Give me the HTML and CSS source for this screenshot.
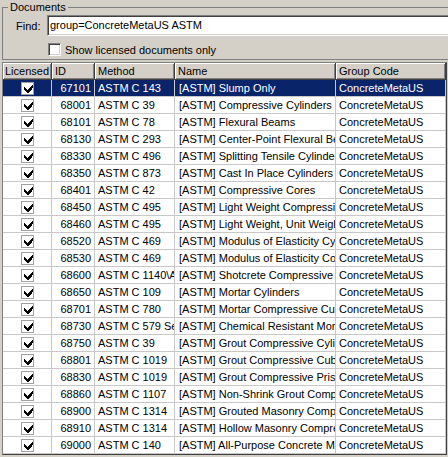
FILE: index.html
```html
<!DOCTYPE html>
<html>
<head>
<meta charset="utf-8">
<link rel="stylesheet" href="styles.css">
</head>
<body>
<fieldset class="group">
  <legend class="group-title">Documents</legend>
  <div class="find-row">
    <label class="find-label">Find:</label>
    <div class="textbox">group=ConcreteMetaUS ASTM</div>
  </div>
  <div class="check-row">
    <span class="checkbox"></span>
    <span class="check-text">Show licensed documents only</span>
  </div>
</fieldset>

<div class="grid">
  <div class="row head">
    <div class="cell c-lic">Licensed</div>
    <div class="cell c-id">ID</div>
    <div class="cell c-method">Method</div>
    <div class="cell c-name">Name</div>
    <div class="cell c-group">Group Code</div>
  </div>

  <div class="row selected">
    <div class="cell c-lic"><span class="cb on"></span></div>
    <div class="cell c-id">67101</div>
    <div class="cell c-method"><span class="clip">ASTM C 143</span></div>
    <div class="cell c-name"><span class="clip">[ASTM] Slump Only</span></div>
    <div class="cell c-group">ConcreteMetaUS</div>
  </div>
  <div class="row">
    <div class="cell c-lic"><span class="cb on"></span></div>
    <div class="cell c-id">68001</div>
    <div class="cell c-method"><span class="clip">ASTM C 39</span></div>
    <div class="cell c-name"><span class="clip">[ASTM] Compressive Cylinders</span></div>
    <div class="cell c-group">ConcreteMetaUS</div>
  </div>
  <div class="row">
    <div class="cell c-lic"><span class="cb on"></span></div>
    <div class="cell c-id">68101</div>
    <div class="cell c-method"><span class="clip">ASTM C 78</span></div>
    <div class="cell c-name"><span class="clip">[ASTM] Flexural Beams</span></div>
    <div class="cell c-group">ConcreteMetaUS</div>
  </div>
  <div class="row">
    <div class="cell c-lic"><span class="cb on"></span></div>
    <div class="cell c-id">68130</div>
    <div class="cell c-method"><span class="clip">ASTM C 293</span></div>
    <div class="cell c-name"><span class="clip">[ASTM] Center-Point Flexural Beams</span></div>
    <div class="cell c-group">ConcreteMetaUS</div>
  </div>
  <div class="row">
    <div class="cell c-lic"><span class="cb on"></span></div>
    <div class="cell c-id">68330</div>
    <div class="cell c-method"><span class="clip">ASTM C 496</span></div>
    <div class="cell c-name"><span class="clip">[ASTM] Splitting Tensile Cylinders</span></div>
    <div class="cell c-group">ConcreteMetaUS</div>
  </div>
  <div class="row">
    <div class="cell c-lic"><span class="cb on"></span></div>
    <div class="cell c-id">68350</div>
    <div class="cell c-method"><span class="clip">ASTM C 873</span></div>
    <div class="cell c-name"><span class="clip">[ASTM] Cast In Place Cylinders</span></div>
    <div class="cell c-group">ConcreteMetaUS</div>
  </div>
  <div class="row">
    <div class="cell c-lic"><span class="cb on"></span></div>
    <div class="cell c-id">68401</div>
    <div class="cell c-method"><span class="clip">ASTM C 42</span></div>
    <div class="cell c-name"><span class="clip">[ASTM] Compressive Cores</span></div>
    <div class="cell c-group">ConcreteMetaUS</div>
  </div>
  <div class="row">
    <div class="cell c-lic"><span class="cb on"></span></div>
    <div class="cell c-id">68450</div>
    <div class="cell c-method"><span class="clip">ASTM C 495</span></div>
    <div class="cell c-name"><span class="clip">[ASTM] Light Weight Compressive</span></div>
    <div class="cell c-group">ConcreteMetaUS</div>
  </div>
  <div class="row">
    <div class="cell c-lic"><span class="cb on"></span></div>
    <div class="cell c-id">68460</div>
    <div class="cell c-method"><span class="clip">ASTM C 495</span></div>
    <div class="cell c-name"><span class="clip">[ASTM] Light Weight, Unit Weight</span></div>
    <div class="cell c-group">ConcreteMetaUS</div>
  </div>
  <div class="row">
    <div class="cell c-lic"><span class="cb on"></span></div>
    <div class="cell c-id">68520</div>
    <div class="cell c-method"><span class="clip">ASTM C 469</span></div>
    <div class="cell c-name"><span class="clip">[ASTM] Modulus of Elasticity Cylinders</span></div>
    <div class="cell c-group">ConcreteMetaUS</div>
  </div>
  <div class="row">
    <div class="cell c-lic"><span class="cb on"></span></div>
    <div class="cell c-id">68530</div>
    <div class="cell c-method"><span class="clip">ASTM C 469</span></div>
    <div class="cell c-name"><span class="clip">[ASTM] Modulus of Elasticity Cores</span></div>
    <div class="cell c-group">ConcreteMetaUS</div>
  </div>
  <div class="row">
    <div class="cell c-lic"><span class="cb on"></span></div>
    <div class="cell c-id">68600</div>
    <div class="cell c-method"><span class="clip">ASTM C 1140\ACI</span></div>
    <div class="cell c-name"><span class="clip">[ASTM] Shotcrete Compressive</span></div>
    <div class="cell c-group">ConcreteMetaUS</div>
  </div>
  <div class="row">
    <div class="cell c-lic"><span class="cb on"></span></div>
    <div class="cell c-id">68650</div>
    <div class="cell c-method"><span class="clip">ASTM C 109</span></div>
    <div class="cell c-name"><span class="clip">[ASTM] Mortar Cylinders</span></div>
    <div class="cell c-group">ConcreteMetaUS</div>
  </div>
  <div class="row">
    <div class="cell c-lic"><span class="cb on"></span></div>
    <div class="cell c-id">68701</div>
    <div class="cell c-method"><span class="clip">ASTM C 780</span></div>
    <div class="cell c-name"><span class="clip">[ASTM] Mortar Compressive Cubes</span></div>
    <div class="cell c-group">ConcreteMetaUS</div>
  </div>
  <div class="row">
    <div class="cell c-lic"><span class="cb on"></span></div>
    <div class="cell c-id">68730</div>
    <div class="cell c-method"><span class="clip">ASTM C 579 Sec</span></div>
    <div class="cell c-name"><span class="clip">[ASTM] Chemical Resistant Mortar</span></div>
    <div class="cell c-group">ConcreteMetaUS</div>
  </div>
  <div class="row">
    <div class="cell c-lic"><span class="cb on"></span></div>
    <div class="cell c-id">68750</div>
    <div class="cell c-method"><span class="clip">ASTM C 39</span></div>
    <div class="cell c-name"><span class="clip">[ASTM] Grout Compressive Cylinders</span></div>
    <div class="cell c-group">ConcreteMetaUS</div>
  </div>
  <div class="row">
    <div class="cell c-lic"><span class="cb on"></span></div>
    <div class="cell c-id">68801</div>
    <div class="cell c-method"><span class="clip">ASTM C 1019</span></div>
    <div class="cell c-name"><span class="clip">[ASTM] Grout Compressive Cubes</span></div>
    <div class="cell c-group">ConcreteMetaUS</div>
  </div>
  <div class="row">
    <div class="cell c-lic"><span class="cb on"></span></div>
    <div class="cell c-id">68830</div>
    <div class="cell c-method"><span class="clip">ASTM C 1019</span></div>
    <div class="cell c-name"><span class="clip">[ASTM] Grout Compressive Prisms</span></div>
    <div class="cell c-group">ConcreteMetaUS</div>
  </div>
  <div class="row">
    <div class="cell c-lic"><span class="cb on"></span></div>
    <div class="cell c-id">68860</div>
    <div class="cell c-method"><span class="clip">ASTM C 1107</span></div>
    <div class="cell c-name"><span class="clip">[ASTM] Non-Shrink Grout Compressive</span></div>
    <div class="cell c-group">ConcreteMetaUS</div>
  </div>
  <div class="row">
    <div class="cell c-lic"><span class="cb on"></span></div>
    <div class="cell c-id">68900</div>
    <div class="cell c-method"><span class="clip">ASTM C 1314</span></div>
    <div class="cell c-name"><span class="clip">[ASTM] Grouted Masonry Compressive</span></div>
    <div class="cell c-group">ConcreteMetaUS</div>
  </div>
  <div class="row">
    <div class="cell c-lic"><span class="cb on"></span></div>
    <div class="cell c-id">68910</div>
    <div class="cell c-method"><span class="clip">ASTM C 1314</span></div>
    <div class="cell c-name"><span class="clip">[ASTM] Hollow Masonry Compressive</span></div>
    <div class="cell c-group">ConcreteMetaUS</div>
  </div>
  <div class="row">
    <div class="cell c-lic"><span class="cb on"></span></div>
    <div class="cell c-id">69000</div>
    <div class="cell c-method"><span class="clip">ASTM C 140</span></div>
    <div class="cell c-name"><span class="clip">[ASTM] All-Purpose Concrete Masonry</span></div>
    <div class="cell c-group">ConcreteMetaUS</div>
  </div>
</div>
</body>
</html>
```
FILE: styles.css
```css
html, body {
  margin: 0;
  padding: 0;
  width: 448px;
  height: 457px;
  overflow: hidden;
  background: #d4d0c8;
  font-family: "Liberation Sans", Arial, sans-serif;
  font-size: 11px;
  color: #000;
}

.group {
  box-sizing: border-box;
  width: 446px;
  margin: 1px 0 0 2px;
  padding: 1px 0 3px 5px;
  border: 1px solid #808080;
  border-right: none;
  min-width: 0;
}

.group-title {
  padding: 0 2px;
  line-height: 13px;
}

.find-row {
  display: flex;
  align-items: center;
  height: 21px;
}

.find-label {
  width: 31px;
  margin-left: 8px;
  flex: none;
}

.textbox {
  flex: 1;
  min-width: 0;
  box-sizing: border-box;
  height: 21px;
  line-height: 17px;
  background: #fff;
  border: 1px solid;
  border-color: #808080 #fff #fff #808080;
  border-right: none;
  box-shadow: inset 1px 1px 0 #404040, inset 0 -1px 0 #d4d0c8;
  padding-top: 1px;
  padding-left: 2px;
  white-space: nowrap;
  overflow: hidden;
}

.check-row {
  display: flex;
  align-items: center;
  height: 13px;
  margin-top: 7px;
  padding-left: 40px;
}

.checkbox {
  box-sizing: border-box;
  width: 13px;
  height: 13px;
  background: #fff;
  border: 1px solid;
  border-color: #808080 #fff #fff #808080;
  box-shadow: inset 1px 1px 0 #404040, inset -1px -1px 0 #d4d0c8;
  flex: none;
}

.check-text {
  margin-left: 4px;
}

.grid {
  box-sizing: border-box;
  width: 445px;
  margin: 2px 0 0 2px;
  border: 1px solid #404040;
  border-top-color: #808080;
  border-left-color: #808080;
  background: #fff;
}

.row {
  display: grid;
  grid-template-columns: 49px 43px 80px 161px 110px;
  height: 17px;
}

.cell {
  box-sizing: border-box;
  height: 17px;
  line-height: 16px;
  padding-left: 3px;
  white-space: nowrap;
  overflow: hidden;
  border-right: 1px solid #c8c8c8;
  border-bottom: 1px solid #c8c8c8;
}

.clip {
  display: block;
  overflow: hidden;
  white-space: nowrap;
}

.c-lic {
  display: flex;
  align-items: center;
  justify-content: center;
  padding-left: 0;
}

.c-id {
  text-align: right;
  padding-right: 3px;
}

.c-name {
  padding-left: 4px;
}

.head .cell {
  background: #d4d0c8;
  border-right: 1px solid #404040;
  border-bottom: 1px solid #404040;
  box-shadow: inset 1px 1px 0 #fff, inset -1px -1px 0 #808080;
  line-height: 16px;
  padding-left: 3px;
  display: block;
  text-align: left;
}

.head .c-lic {
  padding-left: 2px;
}

.selected .cell {
  background: #0a246a;
  color: #fff;
}

.cb {
  box-sizing: border-box;
  width: 13px;
  height: 13px;
  border: 1px solid #a0a0a0;
  background: #fff;
  position: relative;
}

.cb.on::after {
  content: "";
  position: absolute;
  left: 2px;
  top: 2px;
  width: 9px;
  height: 8px;
  background: url("data:image/svg+xml;utf8,<svg xmlns='http://www.w3.org/2000/svg' width='9' height='8' viewBox='0 0 9 8' shape-rendering='crispEdges'><path d='M8 0h1v3h-1zM7 1h1v4h-1zM6 2h1v4h-1zM5 3h1v4h-1zM4 4h1v4h-1zM3 5h1v3h-1zM2 4h1v3h-1zM1 3h1v3h-1zM0 2h1v3h-1z' fill='black'/></svg>") no-repeat;
}
```
